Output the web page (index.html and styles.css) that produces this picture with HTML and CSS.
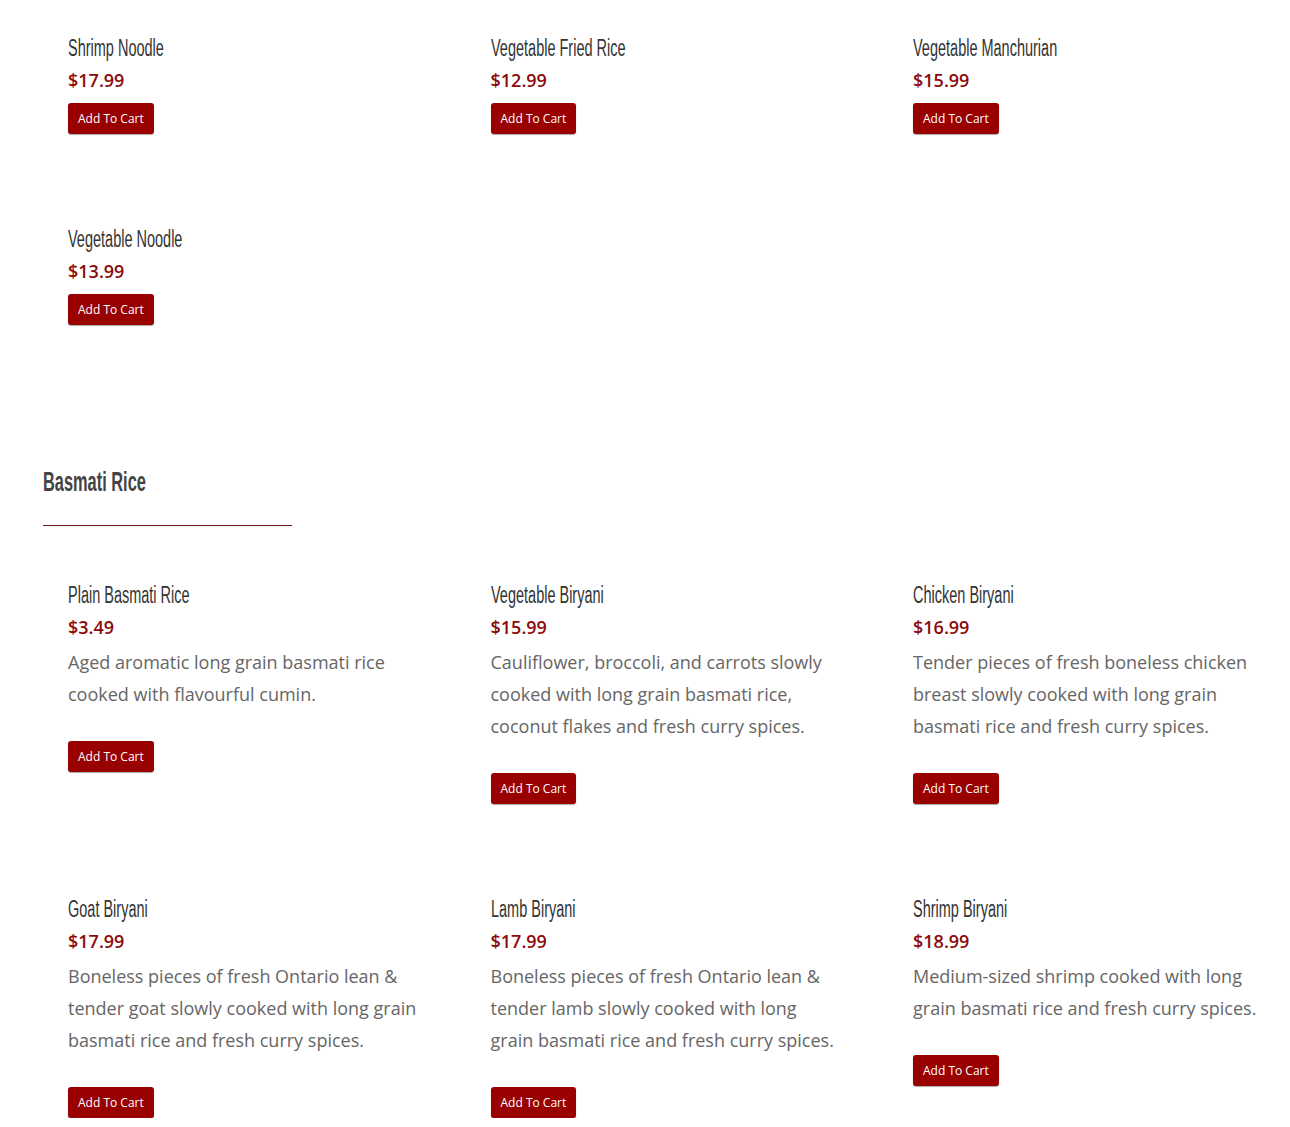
FILE: index.html
```html
<!DOCTYPE html>
<html>
<head>
<meta charset="utf-8">
<link rel="stylesheet" href="styles.css">
</head>
<body>
<div class="page">
  <section class="menu-section">
    <div class="grid">
      <div class="item">
        <h3 class="item-title">Shrimp Noodle</h3>
        <div class="price">$17.99</div>
        <button class="cart-btn">Add To Cart</button>
      </div>
      <div class="item">
        <h3 class="item-title">Vegetable Fried Rice</h3>
        <div class="price">$12.99</div>
        <button class="cart-btn">Add To Cart</button>
      </div>
      <div class="item">
        <h3 class="item-title">Vegetable Manchurian</h3>
        <div class="price">$15.99</div>
        <button class="cart-btn">Add To Cart</button>
      </div>
      <div class="item">
        <h3 class="item-title">Vegetable Noodle</h3>
        <div class="price">$13.99</div>
        <button class="cart-btn">Add To Cart</button>
      </div>
    </div>
  </section>

  <section class="menu-section basmati">
    <h2 class="section-title">Basmati Rice</h2>
    <div class="section-rule"></div>
    <div class="grid">
      <div class="item">
        <h3 class="item-title">Plain Basmati Rice</h3>
        <div class="price">$3.49</div>
        <p class="desc">Aged aromatic long grain basmati rice cooked with flavourful cumin.</p>
        <button class="cart-btn">Add To Cart</button>
      </div>
      <div class="item">
        <h3 class="item-title">Vegetable Biryani</h3>
        <div class="price">$15.99</div>
        <p class="desc">Cauliflower, broccoli, and carrots slowly cooked with long grain basmati rice, coconut flakes and fresh curry spices.</p>
        <button class="cart-btn">Add To Cart</button>
      </div>
      <div class="item">
        <h3 class="item-title">Chicken Biryani</h3>
        <div class="price">$16.99</div>
        <p class="desc">Tender pieces of fresh boneless chicken breast slowly cooked with long grain basmati rice and fresh curry spices.</p>
        <button class="cart-btn">Add To Cart</button>
      </div>
      <div class="item">
        <h3 class="item-title">Goat Biryani</h3>
        <div class="price">$17.99</div>
        <p class="desc">Boneless pieces of fresh Ontario lean &amp; tender goat slowly cooked with long grain basmati rice and fresh curry spices.</p>
        <button class="cart-btn">Add To Cart</button>
      </div>
      <div class="item">
        <h3 class="item-title">Lamb Biryani</h3>
        <div class="price">$17.99</div>
        <p class="desc">Boneless pieces of fresh Ontario lean &amp; tender lamb slowly cooked with long grain basmati rice and fresh curry spices.</p>
        <button class="cart-btn">Add To Cart</button>
      </div>
      <div class="item">
        <h3 class="item-title">Shrimp Biryani</h3>
        <div class="price">$18.99</div>
        <p class="desc">Medium-sized shrimp cooked with long grain basmati rice and fresh curry spices.</p>
        <button class="cart-btn">Add To Cart</button>
      </div>
    </div>
  </section>
</div>
</body>
</html>
```

FILE: styles.css
```css
* { box-sizing: border-box; }

html, body {
  margin: 0;
  padding: 0;
  background: #ffffff;
}

body {
  font-family: "Open Sans", "Liberation Sans", sans-serif;
  color: #666666;
}

.page {
  padding: 32px 20px 0 43px;
}

.grid {
  display: grid;
  grid-template-columns: repeat(3, 350px);
  column-gap: 72.5px;
  row-gap: 89px;
  padding-left: 25px;
  align-items: start;
}

.item {
  display: flex;
  flex-direction: column;
  align-items: flex-start;
}

.item-title {
  margin: 0;
  font-family: "Liberation Sans", "Arial", sans-serif;
  font-weight: 400;
  font-size: 23px;
  line-height: 32px;
  color: #333333;
  white-space: nowrap;
  transform: scaleX(0.63);
  transform-origin: left center;
}

.price {
  font-size: 18px;
  font-weight: 600;
  line-height: 32px;
  color: #8e0a0a;
}

.desc {
  margin: 3px 0 24px;
  font-size: 18px;
  line-height: 32px;
  color: #666666;
}

.cart-btn {
  margin-top: 7px;
  height: 31px;
  padding: 0 10px;
  border: none;
  border-radius: 3px;
  background: #990000;
  color: #ffffff;
  font-family: "Open Sans", "Liberation Sans", sans-serif;
  font-size: 12px;
  line-height: 31px;
  box-shadow: 0 1px 1px rgba(0, 0, 0, 0.35);
  cursor: pointer;
}

.basmati {
  margin-top: 137px;
}

.section-title {
  display: inline-block;
  margin: 0;
  font-family: "Liberation Sans", "Arial", sans-serif;
  font-weight: 700;
  font-size: 28px;
  line-height: 40px;
  color: #444444;
  white-space: nowrap;
  transform: scaleX(0.585);
  transform-origin: left center;
}

.section-rule {
  width: 249px;
  height: 1px;
  margin: 23px 0 53px;
  background: #6e1518;
}
```
